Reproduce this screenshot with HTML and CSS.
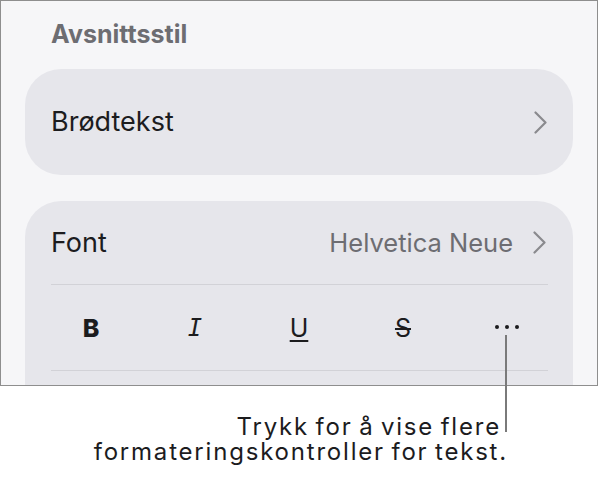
FILE: index.html
```html
<!DOCTYPE html>
<html lang="nb">
  <head>
    <meta charset="UTF-8" />
    <meta name="viewport" content="width=device-width, initial-scale=1.0" />
    <title>Avsnittsstil</title>
    <link rel="stylesheet" href="styles.css">
  </head>
  <body>
    <div class="figure">
      <div class="panel">
        <h3 class="section-title">Avsnittsstil</h3>

        <div class="card style-card">
          <span class="row-label">Brødtekst</span>
          <svg class="chevron" width="13" height="23" viewBox="0 0 13 23">
            <polyline points="1.5,1.5 11.5,11.5 1.5,21.5" />
          </svg>
        </div>

        <div class="card font-card">
          <div class="font-row">
            <span class="row-label">Font</span>
            <span class="row-value">Helvetica Neue</span>
            <svg class="chevron" width="13" height="23" viewBox="0 0 13 23">
              <polyline points="1.5,1.5 11.5,11.5 1.5,21.5" />
            </svg>
          </div>
          <div class="format-row">
            <span class="fmt fmt-bold">B</span>
            <span class="fmt fmt-italic">I</span>
            <span class="fmt fmt-underline">U</span>
            <span class="fmt fmt-strike">S</span>
            <span class="fmt fmt-more"><i></i><i></i><i></i></span>
          </div>
          <div class="font-row"></div>
        </div>
      </div>

      <div class="leader"></div>
      <p class="caption">
        <span class="caption-first">Trykk for å vise flere</span><br>
        formateringskontroller for tekst.
      </p>
    </div>
  </body>
</html>
```

FILE: styles.css
```css
:root {
  --panel: #f6f6f8;
  --card: #e6e6eb;
  --ink: #1c1c1e;
  --muted: #6d6d72;
  --rule: #d2d2d7;
}

* {
  margin: 0;
  padding: 0;
  box-sizing: border-box;
}

body {
  font-family: "Inter", "Liberation Sans", sans-serif;
  background-color: #ffffff;
  color: var(--ink);
}

.figure {
  position: relative;
  width: 599px;
  height: 481px;
}

.panel {
  width: 598px;
  height: 386px;
  border: 1px solid #8e8e8e;
  background-color: var(--panel);
  padding: 18px 24px 0 24px;
  overflow: hidden;
}

.section-title {
  font-size: 25px;
  line-height: 30px;
  font-weight: 700;
  color: var(--muted);
  padding-left: 26px;
  margin-bottom: 20px;
}

.card {
  background-color: var(--card);
  border-radius: 36px;
}

.style-card {
  height: 106px;
  display: flex;
  align-items: center;
  justify-content: space-between;
  padding: 0 26px 0 26px;
  margin-bottom: 26px;
}

.row-label {
  font-size: 27px;
  line-height: 32px;
}

.chevron {
  display: block;
  fill: none;
  stroke: #8a8a8e;
  stroke-width: 2.2;
  stroke-linecap: round;
  stroke-linejoin: round;
}

.font-card {
  height: 240px;
}

.font-row {
  height: 84px;
  margin: 0 25px 0 26px;
  display: flex;
  align-items: center;
  border-bottom: 1px solid var(--rule);
}

.font-row .row-value {
  margin-left: auto;
  margin-right: 20px;
  font-size: 25.5px;
  line-height: 32px;
  color: var(--muted);
}

.font-row .chevron {
  margin-right: 2px;
}

.format-row {
  height: 86px;
  padding: 0 14px;
  display: grid;
  grid-template-columns: repeat(5, 1fr);
  align-items: center;
  justify-items: center;
  position: relative;
}

.format-row::after {
  content: "";
  position: absolute;
  left: 26px;
  right: 25px;
  bottom: 0;
  border-bottom: 1px solid var(--rule);
}

.fmt {
  font-size: 25px;
  line-height: 30px;
  color: var(--ink);
}

.fmt-bold {
  font-weight: 800;
}

.fmt-italic {
  font-family: "DejaVu Sans Mono", monospace;
  font-style: italic;
  font-size: 24px;
}

.fmt-underline {
  text-decoration: underline;
  text-decoration-thickness: 2px;
  text-underline-offset: 3px;
}

.fmt-strike {
  text-decoration: line-through;
  text-decoration-thickness: 2px;
}

.fmt-more {
  display: flex;
  gap: 6px;
  padding-bottom: 2px;
}

.fmt-more i {
  display: block;
  width: 4px;
  height: 4px;
  border-radius: 50%;
  background-color: var(--ink);
}

.leader {
  position: absolute;
  left: 505px;
  top: 335px;
  width: 2px;
  height: 97px;
  background-color: #7a7a7a;
}

.caption {
  margin-top: 28px;
  padding-right: 91px;
  text-align: right;
  font-size: 24px;
  line-height: 25px;
  letter-spacing: 1.8px;
  word-spacing: -2px;
  color: var(--ink);
}

.caption-first {
  padding-right: 7px;
}
```
